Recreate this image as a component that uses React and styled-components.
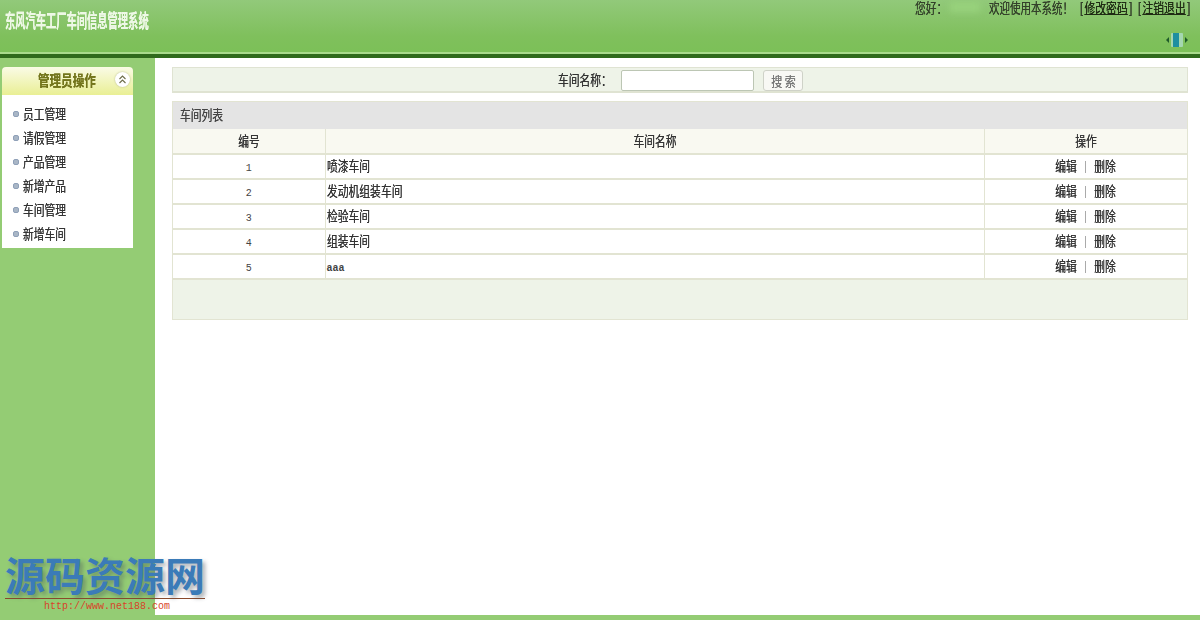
import React from "react";
import styled, { createGlobalStyle } from "styled-components";

const GlobalStyle = createGlobalStyle`
    html, body {
        margin: 0;
        padding: 0;
        background: #fff;
        font-family: "Noto Sans CJK SC", "Liberation Sans", sans-serif;
        color: #333;
    }
`

const Page = styled.div`
    position: relative;
    width: 1200px;
    height: 620px;
    display: flex;
    flex-direction: column;
    overflow: hidden;
`

/* the reference is squeezed sideways, so text is narrowed with a transform */
const Narrow = styled.span`
    display: inline-block;
    white-space: nowrap;
    text-shadow: 0 0 0.7px currentColor;
    transform: scaleX(${(p) => p.$x || 0.77});
    transform-origin: ${(p) => p.$origin || "center"};
`

const Header = styled.div`
    height: 52px;
    display: flex;
    justify-content: space-between;
    padding: 0 11px 0 5px;
    background: linear-gradient(#92c97a, #7fc05c 70%, #7cc058);
    border-bottom: 2px solid #a9da8c;
    flex-shrink: 0;
`

const Title = styled.div`
    width: 150px;
    font-size: 19px;
    line-height: 19px;
    padding-top: 10px;
    font-weight: 700;
    color: #eef8e6;
`

const HeaderRight = styled.div`
    display: flex;
    flex-direction: column;
    align-items: flex-end;
    justify-content: space-between;
    padding-bottom: 4px;
`

const Welcome = styled.div`
    display: flex;
    width: 274px;
    height: 14px;
    padding-top: 1px;
    font-family: "Liberation Sans", "Noto Sans CJK SC", sans-serif;
    font-size: 14px;
    line-height: 14px;
    color: #33402a;
`

const Cell = styled.div`
    width: ${(p) => p.$w}px;
    flex-shrink: 0;
`

const NameBlur = styled.div`
    width: 30px;
    height: 10px;
    margin: 1px 9px 0 0;
    background: #98d27c;
    filter: blur(3px);
    flex-shrink: 0;
`

const HeaderLink = styled.a`
    margin: 0 2px;
    color: #1f2b14;
    text-decoration: underline;
`

const Divider = styled.div`
    height: 4px;
    background: #2f6a1c;
    flex-shrink: 0;
`

const Body = styled.div`
    flex: 1;
    display: flex;
    min-height: 0;
`

const Sidebar = styled.div`
    width: 155px;
    padding: 9px 0 0 2px;
    box-sizing: border-box;
    background: #94cc74;
    flex-shrink: 0;
`

const Panel = styled.div`
    width: 131px;
`

const PanelHead = styled.div`
    height: 28px;
    display: flex;
    align-items: center;
    justify-content: space-between;
    padding: 0 3px 3px 36px;
    box-sizing: border-box;
    border-radius: 4px 4px 0 0;
    background: linear-gradient(#fafbe6, #e9ef94);
    font-size: 15px;
    font-weight: 700;
    color: #73751c;
`

const Collapse = styled.div`
    width: 15px;
    height: 15px;
    border-radius: 50%;
    background: #fff;
    box-shadow: 0 0 2px #b5b98a;
    display: flex;
    align-items: center;
    justify-content: center;
`

const Menu = styled.div`
    background: #fff;
    padding: 6px 0 3px 0;
`

const MenuItem = styled.div`
    height: 24px;
    display: flex;
    align-items: center;
    gap: 4px;
    padding-left: 11px;
    font-size: 14px;
    color: #333;
`

const Bullet = styled.i`
    width: 4px;
    height: 4px;
    margin-top: 1px;
    border: 1px solid #8fa0b8;
    border-radius: 2px;
    background: #a9b6c6;
    flex-shrink: 0;
`

const Main = styled.div`
    flex: 1;
    padding: 9px 12px 0 17px;
    background: #fff;
`

const SearchBar = styled.div`
    height: 26px;
    display: flex;
    align-items: center;
    box-sizing: border-box;
    padding: 1px 0 0 385px;
    background: #eef3e8;
    border: 1px solid #dfe3d2;
    border-bottom-width: 2px;
    font-size: 14px;
    color: #333;
`

const SearchLabel = styled.div`
    width: 63px;
    margin-top: -2px;
    flex-shrink: 0;
`

const SearchInput = styled.input`
    width: 133px;
    height: 21px;
    box-sizing: border-box;
    background: #fff;
    border: 1px solid #bcc6b4;
    border-radius: 2px;
    outline: none;
`

const SearchButton = styled.button`
    width: 40px;
    height: 21px;
    margin-left: 9px;
    padding: 0;
    box-sizing: border-box;
    background: #f8f8f4;
    border: 1px solid #cfd2c8;
    border-radius: 3px;
    font-family: inherit;
    font-size: 13px;
    color: #777;
`

const ListBox = styled.div`
    margin-top: 8px;
    border: 1px solid #e2e4d2;
`

const ListTitle = styled.div`
    height: 27px;
    padding-left: 7px;
    background: #e4e4e4;
    font-size: 14px;
    line-height: 25px;
    color: #444;
`

const Table = styled.table`
    width: 1014px;
    border-collapse: collapse;
    table-layout: fixed;
`

const Th = styled.th`
    height: 25px;
    padding: 0 0 2px;
    box-sizing: border-box;
    width: ${(p) => p.$w}px;
    background: #f9f9f1;
    border: 1px solid #e2e4d2;
    border-top: none;
    border-bottom-width: 2px;
    font-size: 14px;
    font-weight: 400;
    color: #333;
    &:first-child { border-left: none; }
    &:last-child { border-right: none; }
`

const Td = styled.td`
    height: 25px;
    padding: ${(p) => (p.$left ? "0 0 3px 1px" : "0 0 3px")};
    box-sizing: border-box;
    text-align: ${(p) => (p.$left ? "left" : "center")};
    background: #fff;
    border: 1px solid #e2e4d2;
    border-bottom-width: 2px;
    font-size: 14px;
    color: #333;
    &:first-child { border-left: none; }
    &:last-child { border-right: none; }
`

const Num = styled.span`
    font-family: "Liberation Mono", monospace;
    font-size: 10px;
    font-weight: ${(p) => (p.$bold ? 700 : 400)};
    color: #444;
`

const ActionLink = styled.a`
    color: #333;
`

const Sep = styled.span`
    display: inline-block;
    width: 1px;
    height: 12px;
    margin: 0 5px;
    background: #aaa;
    vertical-align: -2px;
`

const ListFooter = styled.div`
    height: 39px;
    background: #eef3e8;
`

const BottomBar = styled.div`
    height: 5px;
    background: #94cc74;
    flex-shrink: 0;
`

const Watermark = styled.div`
    position: absolute;
    left: 5px;
    top: 552px;
    width: 200px;
`

const WatermarkText = styled.div`
    font-size: 40px;
    line-height: 44px;
    height: 46px;
    font-weight: 700;
    white-space: nowrap;
    color: #3b7bb8;
    text-shadow: 3px 3px 4px rgba(70, 80, 90, 0.45);
`

const WatermarkLine = styled.div`
    height: 1px;
    background: #8a4a2c;
`

const WatermarkUrl = styled.div`
    margin-top: 2px;
    padding-left: 39px;
    font-family: "Liberation Mono", monospace;
    font-size: 10px;
    line-height: 12px;
    color: #d8442a;
`

function ToggleIcon() {
    return (
        <svg width="24" height="16" viewBox="0 0 24 16">
            <path d="M1 8 L4 5 V11 Z" fill="#1f5a2a" />
            <rect x="6" y="1" width="12" height="14" rx="1" fill="#a5d7b0" />
            <rect x="8" y="1" width="6" height="14" fill="#1d8fa0" />
            <path d="M23 8 L20 5 V11 Z" fill="#1f5a2a" />
        </svg>
    );
}

function CollapseIcon() {
    return (
        <svg width="9" height="9" viewBox="0 0 9 9" fill="none" stroke="#6d6d4a" strokeWidth="1.1">
            <path d="M1.5 4 L4.5 1 L7.5 4" />
            <path d="M1.5 8 L4.5 5 L7.5 8" />
        </svg>
    );
}

const menus = ["员工管理", "请假管理", "产品管理", "新增产品", "车间管理", "新增车间"];
const rows = [
    { id: 1, name: "喷漆车间" },
    { id: 2, name: "发动机组装车间" },
    { id: 3, name: "检验车间" },
    { id: 4, name: "组装车间" },
    { id: 5, name: "aaa" },
];

export default function App() {
    return (
        <Page>
            <GlobalStyle />
            <Header>
                <Title>
                    <Narrow $x={0.54} $origin="left">东风汽车工厂车间信息管理系统</Narrow>
                </Title>
                <HeaderRight>
                    <Welcome>
                        <Cell $w={35}><Narrow $origin="left">您好：</Narrow></Cell>
                        <NameBlur />
                        <Cell $w={91}><Narrow $x={0.75} $origin="left">欢迎使用本系统！</Narrow></Cell>
                        <Cell $w={58}>
                            <Narrow $origin="left">[<HeaderLink>修改密码</HeaderLink>]</Narrow>
                        </Cell>
                        <Cell $w={51}>
                            <Narrow $origin="left">[<HeaderLink>注销退出</HeaderLink>]</Narrow>
                        </Cell>
                    </Welcome>
                    <ToggleIcon />
                </HeaderRight>
            </Header>
            <Divider />
            <Body>
                <Sidebar>
                    <Panel>
                        <PanelHead>
                            <Narrow $origin="left">管理员操作</Narrow>
                            <Collapse><CollapseIcon /></Collapse>
                        </PanelHead>
                        <Menu>
                            {menus.map((m) => (
                                <MenuItem key={m}>
                                    <Bullet />
                                    <Narrow $origin="left">{m}</Narrow>
                                </MenuItem>
                            ))}
                        </Menu>
                    </Panel>
                </Sidebar>
                <Main>
                    <SearchBar>
                        <SearchLabel><Narrow $origin="left">车间名称：</Narrow></SearchLabel>
                        <SearchInput />
                        <SearchButton><Narrow $x={0.85}>搜 索</Narrow></SearchButton>
                    </SearchBar>
                    <ListBox>
                        <ListTitle><Narrow $origin="left">车间列表</Narrow></ListTitle>
                        <Table>
                            <thead>
                                <tr>
                                    <Th $w={152}><Narrow>编号</Narrow></Th>
                                    <Th $w={659}><Narrow>车间名称</Narrow></Th>
                                    <Th $w={203}><Narrow>操作</Narrow></Th>
                                </tr>
                            </thead>
                            <tbody>
                                {rows.map((r) => (
                                    <tr key={r.id}>
                                        <Td><Num>{r.id}</Num></Td>
                                        <Td $left>
                                            {r.id === 5
                                                ? <Num $bold>{r.name}</Num>
                                                : <Narrow $origin="left">{r.name}</Narrow>}
                                        </Td>
                                        <Td>
                                            <ActionLink><Narrow>编辑</Narrow></ActionLink>
                                            <Sep />
                                            <ActionLink><Narrow>删除</Narrow></ActionLink>
                                        </Td>
                                    </tr>
                                ))}
                            </tbody>
                        </Table>
                        <ListFooter />
                    </ListBox>
                </Main>
            </Body>
            <BottomBar />
            <Watermark>
                <WatermarkText>源码资源网</WatermarkText>
                <WatermarkLine />
                <WatermarkUrl>http://www.net188.com</WatermarkUrl>
            </Watermark>
        </Page>
    );
}
